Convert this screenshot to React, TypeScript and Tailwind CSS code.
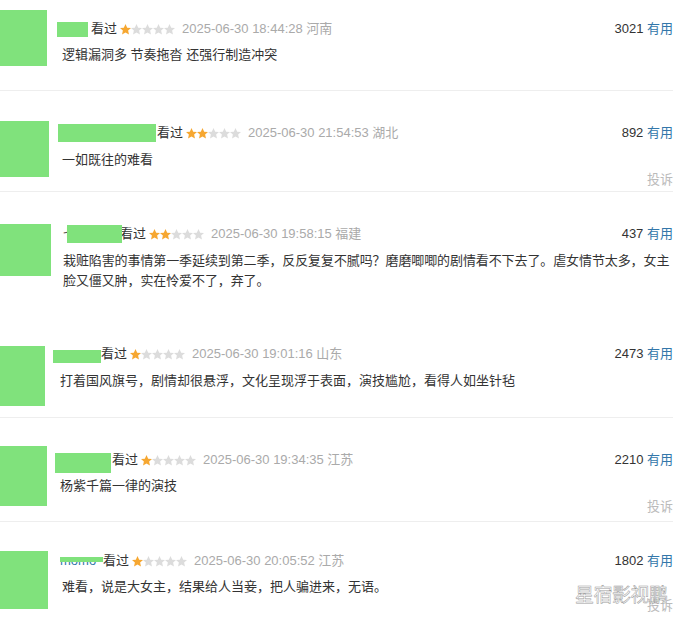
import React from 'react';

type Row = {
  row: string;
  avatar: string;
  content: string;
  name: React.ReactNode;
  stars: number;
  date: string;
  count: string;
  comment: React.ReactNode;
  commentCls: string;
  report?: string;
};

const Green = ({ className }: { className: string }) => (
  <span className={'block shrink-0 bg-[#80e27c] ' + className} />
);

const Star = ({ on }: { on: boolean }) => (
  <svg width="11" height="11" viewBox="1.5 1.5 21 21" className="shrink-0">
    <path
      d="M12 1.5l3.2 7 7.3.7-5.5 4.9 1.6 7.4L12 17.7l-6.6 3.8L7 14.1 1.5 9.2l7.3-.7z"
      fill={on ? '#f6a731' : '#dcdcdc'}
    />
  </svg>
);

const rows: Row[] = [
  {
    row: 'h-[91px] border-b border-[#eeeeee]',
    avatar: 'mt-[10px] w-[47px] h-[56px]',
    content: 'ml-[10px] pt-[20px]',
    name: <Green className="w-[31px] h-[15px] mr-[3px]" />,
    stars: 1,
    date: '2025-06-30 18:44:28 河南',
    count: '3021',
    comment: '逻辑漏洞多 节奏拖沓 还强行制造冲突',
    commentCls: 'mt-[7px] pl-[5px]',
  },
  {
    row: 'h-[101px] border-b border-[#eeeeee]',
    avatar: 'mt-[30px] w-[49px] h-[56px]',
    content: 'ml-[9px] pt-[33px]',
    name: <Green className="w-[98px] h-[18px] mr-[1px]" />,
    stars: 2,
    date: '2025-06-30 21:54:53 湖北',
    count: '892',
    comment: '一如既往的难看',
    commentCls: 'mt-[8px] pl-[4px]',
    report: 'mt-0',
  },
  {
    row: 'h-[128px]',
    avatar: 'mt-[32px] w-[51px] h-[52px]',
    content: 'ml-[12px] pt-[33px]',
    name: (
      <span className="relative w-[59px] h-[18px] mr-[-2px] overflow-hidden">
        <span className="absolute left-0 top-0 leading-[18px] text-[#555]">七</span>
        <span className="absolute left-[4px] top-0 w-[55px] h-[18px] bg-[#80e27c]" />
      </span>
    ),
    stars: 2,
    date: '2025-06-30 19:58:15 福建',
    count: '437',
    comment: (
      <>
        <span className="whitespace-nowrap">
          栽赃陷害的事情第一季延续到第二季，反反复复不腻吗？磨磨唧唧的剧情看不下去了。虐女情节太多，女主
        </span>
        <br />
        脸又僵又肿，实在怜爱不了，弃了。
      </>
    ),
    commentCls: 'mt-[8px] pl-0 tracking-[-0.1px]',
  },
  {
    row: 'h-[98px] border-b border-[#eeeeee]',
    avatar: 'mt-[26px] w-[45px] h-[60px]',
    content: 'ml-[8px] pt-[25px]',
    name: <Green className="w-[48px] h-[13px] mt-[5px]" />,
    stars: 1,
    date: '2025-06-30 19:01:16 山东',
    count: '2473',
    comment: '打着国风旗号，剧情却很悬浮，文化呈现浮于表面，演技尴尬，看得人如坐针毡',
    commentCls: 'mt-[8px] pl-[7px]',
  },
  {
    row: 'h-[104px] border-b border-[#eeeeee]',
    avatar: 'mt-[28px] w-[47px] h-[60px]',
    content: 'ml-[8px] pt-[33px]',
    name: <Green className="w-[56px] h-[20px] mt-[6px] mr-[1px]" />,
    stars: 1,
    date: '2025-06-30 19:34:35 江苏',
    count: '2210',
    comment: '杨紫千篇一律的演技',
    commentCls: 'mt-[7px] pl-[5px]',
    report: 'mt-[1px]',
  },
  {
    row: 'h-[97px]',
    avatar: 'mt-[29px] w-[48px] h-[58px]',
    content: 'ml-[12px] pt-[30px]',
    name: (
      <span className="relative w-[43px] text-[#37a] overflow-hidden">
        momo
        <span className="absolute left-0 top-[5px] w-[43px] h-[5px] bg-[#80e27c]" />
      </span>
    ),
    stars: 1,
    date: '2025-06-30 20:05:52 江苏',
    count: '1802',
    comment: '难看，说是大女主，结果给人当妾，把人骗进来，无语。',
    commentCls: 'mt-[7px] pl-[2px]',
    report: 'mt-[-1px]',
  },
];

export default function App() {
  return (
    <div
      className="relative w-[678px] h-[619px] overflow-hidden bg-white text-[13px] text-[#333]"
      style={{ fontFamily: '"Liberation Sans", Arial, "Noto Sans CJK SC", sans-serif' }}
    >
      <div className="w-[673px]">
        {rows.map((r, i) => (
          <div key={i} className={'flex ' + r.row}>
            <div className={'shrink-0 bg-[#80e27c] ' + r.avatar} />
            <div className={'flex-1 flex flex-col ' + r.content}>
              <div className="flex items-center h-[18px] leading-[18px]">
                {r.name}
                <span className="text-[#333]">看过</span>
                <span className="flex items-center ml-[3px]">
                  {[0, 1, 2, 3, 4].map((s) => (
                    <Star key={s} on={s < r.stars} />
                  ))}
                </span>
                <span className="ml-[7px] text-[#aaa]">{r.date}</span>
                <span className="ml-auto text-[#333]">
                  {r.count} <span className="text-[#37a]">有用</span>
                </span>
              </div>
              <div className={'leading-[20px] text-[#333] ' + r.commentCls}>{r.comment}</div>
              {r.report && (
                <div className={'self-end leading-[20px] text-[#bbb] ' + r.report}>投诉</div>
              )}
            </div>
          </div>
        ))}
      </div>
      <div className="absolute left-[575px] top-[585px] text-[19px] leading-[22px] text-white [-webkit-text-stroke:0.5px_#9a9a9a] tracking-[-0.5px]">
        星宿影视鹏
      </div>
    </div>
  );
}
